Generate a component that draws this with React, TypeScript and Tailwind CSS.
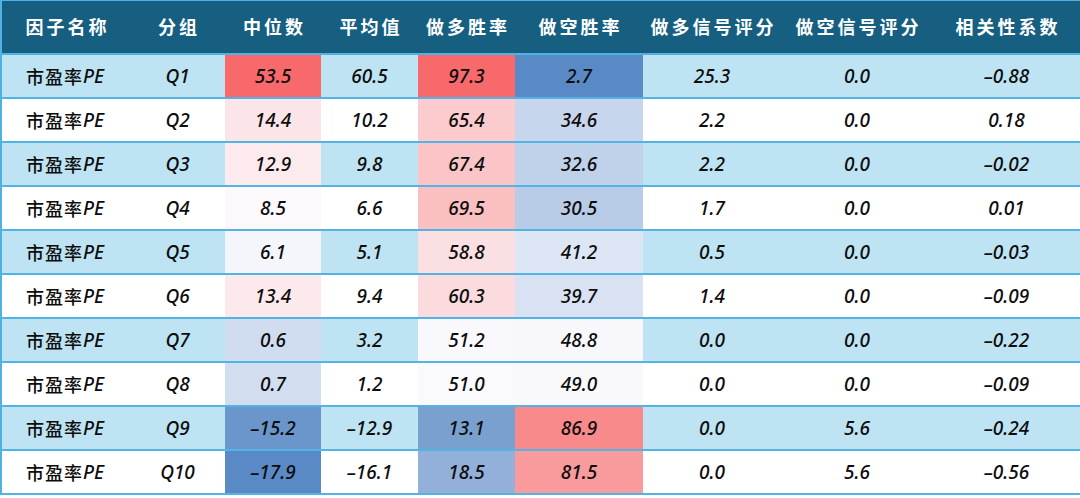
import React from "react";

type Row = {
  q: string;
  v: string[];
  c: string[]; // bg classes for 中位数, 做多胜率, 做空胜率
};

const rows: Row[] = [
  { q: "Q1", v: ["53.5", "60.5", "97.3", "2.7", "25.3", "0.0", "–0.88"], c: ["bg-[#f8696b]", "bg-[#f8696b]", "bg-[#5a8ac6]"] },
  { q: "Q2", v: ["14.4", "10.2", "65.4", "34.6", "2.2", "0.0", "0.18"], c: ["bg-[#fbe5e8]", "bg-[#fbcbce]", "bg-[#c7d6ec]"] },
  { q: "Q3", v: ["12.9", "9.8", "67.4", "32.6", "2.2", "0.0", "–0.02"], c: ["bg-[#fceaed]", "bg-[#fbc5c8]", "bg-[#c0d1ea]"] },
  { q: "Q4", v: ["8.5", "6.6", "69.5", "30.5", "1.7", "0.0", "0.01"], c: ["bg-[#fcf8fb]", "bg-[#fabfc1]", "bg-[#b9cce7]"] },
  { q: "Q5", v: ["6.1", "5.1", "58.8", "41.2", "0.5", "0.0", "–0.03"], c: ["bg-[#f4f6fc]", "bg-[#fbe0e3]", "bg-[#dde6f4]"] },
  { q: "Q6", v: ["13.4", "9.4", "60.3", "39.7", "1.4", "0.0", "–0.09"], c: ["bg-[#fce9ec]", "bg-[#fbdbde]", "bg-[#d8e2f2]"] },
  { q: "Q7", v: ["0.6", "3.2", "51.2", "48.8", "0.0", "0.0", "–0.22"], c: ["bg-[#d0ddf0]", "bg-[#f9f8fc]", "bg-[#f8f8fc]"] },
  { q: "Q8", v: ["0.7", "1.2", "51.0", "49.0", "0.0", "0.0", "–0.09"], c: ["bg-[#d2def0]", "bg-[#faf9fc]", "bg-[#f9f9fc]"] },
  { q: "Q9", v: ["–15.2", "–12.9", "13.1", "86.9", "0.0", "5.6", "–0.24"], c: ["bg-[#6b96cc]", "bg-[#7aa0d0]", "bg-[#f88a8b]"] },
  { q: "Q10", v: ["–17.9", "–16.1", "18.5", "81.5", "0.0", "5.6", "–0.56"], c: ["bg-[#5a8ac6]", "bg-[#92b0da]", "bg-[#f99a9c]"] },
];

const headers = ["因子名称", "分组", "中位数", "平均值", "做多胜率", "做空胜率", "做多信号评分", "做空信号评分", "相关性系数"];

const gridCols = "grid grid-cols-[128px_95px_96px_97px_97px_128px_138px_152px_147px]";

export default function App() {
  return (
    <div className="w-[1080px] h-[498px] bg-white overflow-hidden">
      <div
        className="border-l-2 border-t border-[#4fb2e3] text-[#0d0d0d]"
        style={{ fontFamily: '"Noto Sans", "Open Sans", "Noto Sans CJK SC", sans-serif' }}
      >
        <div className={`${gridCols} h-[54px] bg-[#175f81] border-b-2 border-[#4fb2e3]`}>
          {headers.map((h) => (
            <div
              key={h}
              className="flex items-center justify-center text-white font-bold text-[18px] tracking-[3px] pl-[3px] pb-[2px]"
              style={{ fontFamily: '"Noto Sans CJK SC", sans-serif' }}
            >
              {h}
            </div>
          ))}
        </div>
        {rows.map((r, i) => {
          const rowBg = i % 2 === 0 ? "bg-[#bee4f4]" : "bg-white";
          return (
            <div key={r.q} className={`${gridCols} h-[44px] border-b-2 border-[#52b4e4] ${rowBg} text-[19px] font-medium`}>
              <div className="flex items-center justify-center pr-[2px]">
                <span className="not-italic text-[18px] tracking-[1px]" style={{ fontFamily: '"Noto Sans CJK SC", sans-serif' }}>市盈率</span>
                <span className="italic">PE</span>
              </div>
              <div className="flex items-center justify-center italic">{r.q}</div>
              <div className={`flex items-center justify-center italic ${r.c[0]}`}>{r.v[0]}</div>
              <div className="flex items-center justify-center italic">{r.v[1]}</div>
              <div className={`flex items-center justify-center italic ${r.c[1]}`}>{r.v[2]}</div>
              <div className={`flex items-center justify-center italic ${r.c[2]}`}>{r.v[3]}</div>
              <div className="flex items-center justify-center italic">{r.v[4]}</div>
              <div className="flex items-center justify-center italic">{r.v[5]}</div>
              <div className="flex items-center justify-center italic">{r.v[6]}</div>
            </div>
          );
        })}
      </div>
    </div>
  );
}
